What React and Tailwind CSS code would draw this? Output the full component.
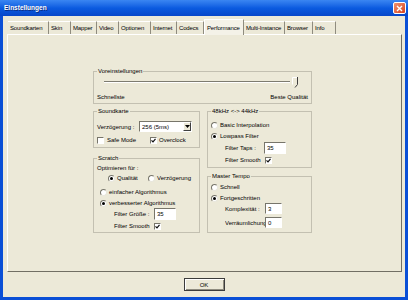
import React from 'react';

const Check = ({ checked }) => (
  <span className="w-[7px] h-[7px] shrink-0 bg-white border border-t-[#77756a] border-l-[#77756a] border-r-white border-b-white flex items-center justify-center">
    {checked && (
      <svg width="5" height="5" viewBox="0 0 5 5">
        <polyline points="0.5,2.3 2,3.8 4.5,0.8" fill="none" stroke="#111" strokeWidth="1.2" />
      </svg>
    )}
  </span>
);

const Radio = ({ checked }) => (
  <span className="w-[7px] h-[7px] shrink-0 rounded-full bg-white border border-t-[#77756a] border-l-[#77756a] border-r-[#e8e6dc] border-b-[#e8e6dc] flex items-center justify-center">
    {checked && <span className="w-[3px] h-[3px] rounded-full bg-black" />}
  </span>
);

const Field = ({ value, w, h }) => (
  <span className={`${w} ${h} bg-white border border-t-[#77756a] border-l-[#77756a] border-r-white border-b-white flex items-center pl-[2px]`}>
    {value}
  </span>
);

const Option = ({ checked, label, className = '' }) => (
  <div className={`flex items-center gap-[2px] h-[8px] ${className}`}>
    <Radio checked={checked} />
    <span>{label}</span>
  </div>
);

const tabs = [
  { name: 'Soundkarten', w: 'w-[41px]' },
  { name: 'Skin', w: 'w-[22px]' },
  { name: 'Mapper', w: 'w-[26px]' },
  { name: 'Video', w: 'w-[22px]' },
  { name: 'Optionen', w: 'w-[32px]' },
  { name: 'Internet', w: 'w-[26px]' },
  { name: 'Codecs', w: 'w-[27px]' },
  { name: 'Performance', w: 'w-[40px]', active: true },
  { name: 'Multi-Instance', w: 'w-[41px]' },
  { name: 'Browser', w: 'w-[28px]' },
  { name: 'Info', w: 'w-[23px]' },
];

const App = () => {
  return (
    <div className="w-[408px] h-[300px] flex flex-col bg-[#0a4fd6] font-['Liberation_Sans',Arial,sans-serif] text-[6px] leading-[8px] text-black overflow-hidden">
      {/* title bar */}
      <div className="h-[16px] shrink-0 flex items-center justify-between pl-[4px] pr-[2px] bg-gradient-to-b from-[#3a86f2] via-[#0b5be0] to-[#0747c9]">
        <span className="text-[6.5px] font-bold text-white [text-shadow:1px_1px_0_#0a2a80]">Einstellungen</span>
        <span className="w-[13px] h-[12px] rounded-[2px] border border-white bg-gradient-to-br from-[#f0926f] to-[#d43d16] flex items-center justify-center">
          <svg width="7" height="7" viewBox="0 0 7 7">
            <path d="M1 1 L6 6 M6 1 L1 6" stroke="white" strokeWidth="1.4" />
          </svg>
        </span>
      </div>

      {/* body */}
      <div className="flex-1 mx-[3px] mb-[3px] bg-[#ece9d8] flex flex-col pt-[3px]">
        <div className="flex items-end h-[15px] ml-[5px] tracking-[-0.15px]">
          {tabs.map((t) =>
            t.active ? (
              <div
                key={t.name}
                className={`${t.w} h-[16px] -mb-[1px] z-10 pl-[2px] flex items-center bg-[#f4f2e8] border-t border-l border-t-white border-l-white border-r border-r-[#8f8c7f] whitespace-nowrap`}
              >
                {t.name}
              </div>
            ) : (
              <div
                key={t.name}
                className={`${t.w} h-[13px] pl-[2px] flex items-center border-t border-t-white border-r border-r-[#8f8c7f] whitespace-nowrap`}
              >
                {t.name}
              </div>
            )
          )}
        </div>

        {/* panel */}
        <div className="h-[238px] ml-[4px] mr-[3px] border border-t-white border-l-white border-r-[#716f64] border-b-[#716f64] pl-[85px] pt-[32px]">
          <fieldset className="w-[219px] border border-[#c3c0b1] pl-[3px] pr-[3px] pb-[2px]">
            <legend className="px-[1px] leading-[8px]">Voreinstellungen</legend>
            <div className="flex h-[14px] items-center pl-[7px]">
              <div className="w-[186px] h-[2px] border-t border-t-[#7d7b70] border-b border-b-white" />
              <svg width="6" height="11" viewBox="0 0 6 11" className="ml-[2px]">
                <path d="M0.5 7.5 L0.5 0.5 L5 0.5" fill="none" stroke="#ffffff" />
                <path d="M5.5 0 L5.5 7.5 L3 10.5" fill="none" stroke="#404040" />
              </svg>
            </div>
            <div className="mt-[4px] flex justify-between">
              <span>Schnellste</span>
              <span>Beste Qualität</span>
            </div>
          </fieldset>

          <div className="flex gap-[7px] mt-[3px]">
            {/* left column */}
            <div className="w-[107px] flex flex-col">
              <fieldset className="border border-[#c3c0b1] pl-[3px] pr-[3px] pb-[3px]">
                <legend className="px-[1px] leading-[8px]">Soundkarte</legend>
                <div className="mt-[6px] h-[11px] flex items-center">
                  <span className="w-[42px]">Verzögerung :</span>
                  <span className="w-[53px] h-[11px] bg-white border border-t-[#77756a] border-l-[#77756a] border-r-white border-b-white flex items-center">
                    <span className="flex-1 pl-[2px]">256 (5ms)</span>
                    <span className="w-[8px] h-[9px] bg-[#ece9d8] border border-t-white border-l-white border-r-[#404040] border-b-[#404040] flex items-center justify-center">
                      <svg width="5" height="3" viewBox="0 0 5 3">
                        <path d="M0 0 L5 0 L2.5 3 Z" fill="#000" />
                      </svg>
                    </span>
                  </span>
                </div>
                <div className="mt-[4px] h-[8px] flex items-center">
                  <div className="w-[53px] flex items-center gap-[3px]">
                    <Check />
                    <span>Safe Mode</span>
                  </div>
                  <div className="flex items-center gap-[2px]">
                    <Check checked />
                    <span>Overclock</span>
                  </div>
                </div>
              </fieldset>

              <fieldset className="mt-[6px] border border-[#c3c0b1] pl-[3px] pr-[3px] pb-[2px]">
                <legend className="px-[1px] leading-[8px]">Scratch</legend>
                <div className="mt-[2px]">Optimieren für :</div>
                <div className="mt-[2px] h-[8px] pl-[11px] flex items-center">
                  <Option checked label="Qualität" className="w-[40px]" />
                  <Option label="Verzögerung" />
                </div>
                <Option label="einfacher Algorithmus" className="mt-[6px] pl-[3px]" />
                <Option checked label="verbesserter Algorithmus" className="mt-[3px] pl-[3px]" />
                <div className="mt-[1px] h-[12px] pl-[17px] flex items-center">
                  <span className="w-[40px]">Filter Größe :</span>
                  <Field value="35" w="w-[22px]" h="h-[12px]" />
                </div>
                <div className="mt-[2px] h-[8px] pl-[17px] flex items-center">
                  <span className="w-[40px]">Filter Smooth</span>
                  <Check checked />
                </div>
              </fieldset>
            </div>

            {/* right column */}
            <div className="w-[105px] flex flex-col">
              <fieldset className="border border-[#c3c0b1] pl-[3px] pr-[3px] pb-[3px]">
                <legend className="px-[1px] leading-[8px]">48kHz &lt;-&gt; 44kHz</legend>
                <Option label="Basic Interpolation" className="mt-[6px]" />
                <Option checked label="Lowpass Filter" className="mt-[3px]" />
                <div className="mt-[2px] h-[12px] pl-[14px] flex items-center">
                  <span className="w-[39px]">Filter Taps :</span>
                  <Field value="35" w="w-[22px]" h="h-[12px]" />
                </div>
                <div className="mt-[2px] h-[8px] pl-[14px] flex items-center">
                  <span className="w-[40px]">Filter Smooth</span>
                  <Check checked />
                </div>
              </fieldset>

              <fieldset className="mt-[4px] border border-[#c3c0b1] pl-[3px] pr-[3px] pb-[4px]">
                <legend className="px-[1px] leading-[8px]">Master Tempo</legend>
                <Option label="Schnell" className="mt-[3px]" />
                <Option checked label="Fortgeschritten" className="mt-[3px]" />
                <div className="mt-[1px] h-[11px] pl-[14px] flex items-center">
                  <span className="w-[40px]">Komplexität :</span>
                  <Field value="3" w="w-[17px]" h="h-[11px]" />
                </div>
                <div className="mt-[3px] h-[11px] pl-[14px] flex items-center">
                  <span className="w-[40px] overflow-hidden whitespace-nowrap">Verräumlichung</span>
                  <Field value="0" w="w-[17px]" h="h-[11px]" />
                </div>
              </fieldset>
            </div>
          </div>
        </div>

        {/* OK */}
        <div className="mt-[6px] flex justify-center">
          <button className="w-[41px] h-[13px] border border-[#3c3c3c] bg-[#ece9d8] shadow-[inset_1px_1px_0_#fff,inset_-1px_-1px_0_#8f8c7f] text-[6px] leading-[8px] font-['Liberation_Sans',Arial,sans-serif]">
            OK
          </button>
        </div>
      </div>
    </div>
  );
};

export default App;
